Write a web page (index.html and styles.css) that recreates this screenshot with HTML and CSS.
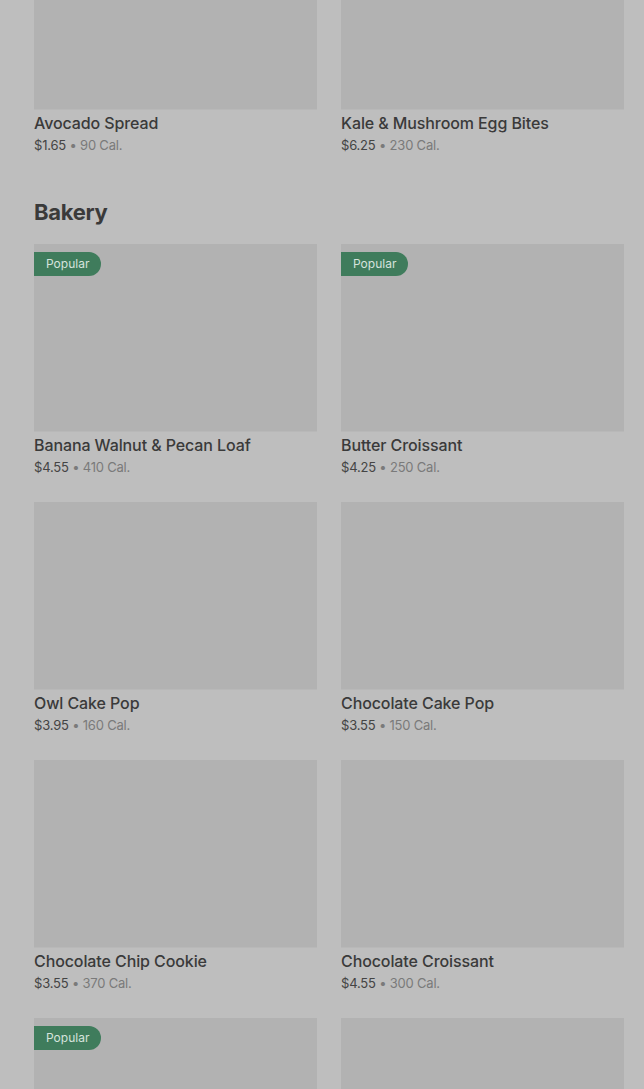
FILE: index.html
```html
<!DOCTYPE html>
<html lang="en">
  <head>
    <title>Menu</title>
    <meta charset="UTF-8">
    <link rel="stylesheet" href="styles.css">
  </head>
  <body>
    <div class="menu">
        <div class="grid first">
            <div class="card">
                <div class="pic"></div>
                <div class="name">Avocado Spread</div>
                <div class="meta"><span class="price">$1.65</span> • 90 Cal.</div>
            </div>
            <div class="card">
                <div class="pic"></div>
                <div class="name">Kale &amp; Mushroom Egg Bites</div>
                <div class="meta"><span class="price">$6.25</span> • 230 Cal.</div>
            </div>
        </div>

        <h2 class="section">Bakery</h2>
        <div class="grid">
            <div class="card">
                <div class="pic"><span class="badge">Popular</span></div>
                <div class="name">Banana Walnut &amp; Pecan Loaf</div>
                <div class="meta"><span class="price">$4.55</span> • 410 Cal.</div>
            </div>
            <div class="card">
                <div class="pic"><span class="badge">Popular</span></div>
                <div class="name">Butter Croissant</div>
                <div class="meta"><span class="price">$4.25</span> • 250 Cal.</div>
            </div>
            <div class="card">
                <div class="pic"></div>
                <div class="name">Owl Cake Pop</div>
                <div class="meta"><span class="price">$3.95</span> • 160 Cal.</div>
            </div>
            <div class="card">
                <div class="pic"></div>
                <div class="name">Chocolate Cake Pop</div>
                <div class="meta"><span class="price">$3.55</span> • 150 Cal.</div>
            </div>
            <div class="card">
                <div class="pic"></div>
                <div class="name">Chocolate Chip Cookie</div>
                <div class="meta"><span class="price">$3.55</span> • 370 Cal.</div>
            </div>
            <div class="card">
                <div class="pic"></div>
                <div class="name">Chocolate Croissant</div>
                <div class="meta"><span class="price">$4.55</span> • 300 Cal.</div>
            </div>
            <div class="card">
                <div class="pic"><span class="badge">Popular</span></div>
            </div>
            <div class="card">
                <div class="pic"></div>
            </div>
        </div>
    </div>
  </body>
</html>
```
FILE: styles.css
```css
*{
    margin: 0;
    padding: 0;
    box-sizing: border-box;
}
html,body{
    width: 100%;
    height: 100%;
    overflow: hidden;
}
body{
    background: #bebebe;
    font-family: Inter, "Noto Sans", sans-serif;
    color: #383838;
}
.menu{
    padding: 0 20px 0 34px;
}
.grid{
    display: grid;
    grid-template-columns: 1fr 1fr;
    column-gap: 24px;
    row-gap: 26px;
}
.first{
    margin-top: -78px;
}
.pic{
    height: 188px;
    background: #b2b2b2;
    border-bottom: 1px solid #b8b8b8;
    position: relative;
}
.badge{
    position: absolute;
    left: 0;
    top: 8px;
    height: 24px;
    line-height: 24px;
    padding: 0 12px;
    background: #3f7c5c;
    color: #d6e3dc;
    font-size: 12px;
    border-radius: 0 12px 12px 0;
}
.name{
    margin-top: 3px;
    font-size: 16px;
    line-height: 20px;
    font-weight: 500;
    color: #3a3a3a;
    letter-spacing: -0.1px;
}
.meta{
    margin-top: 3px;
    font-size: 13px;
    line-height: 18px;
    color: #7a7a7a;
    letter-spacing: -0.2px;
}
.price{
    color: #444;
}
.section{
    margin: 44px 0 18px;
    font-size: 22px;
    line-height: 28px;
    font-weight: 700;
    color: #3a3a3a;
    letter-spacing: -0.3px;
}
```
